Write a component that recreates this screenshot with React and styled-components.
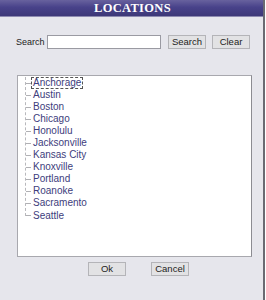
import React, { useState } from "react";
import styled, { createGlobalStyle } from "styled-components";

const Global = createGlobalStyle`
  html, body {
    margin: 0;
    padding: 0;
    background: #fff;
  }
`;

const Dialog = styled.div`
  width: 263px;
  height: 300px;
  background: #e6e6ec;
  border-right: 2px solid #6a6a72;
  box-sizing: content-box;
  display: flex;
  flex-direction: column;
  font-family: "Liberation Sans", Arial, sans-serif;
`;

const Title = styled.div`
  height: 16px;
  background: linear-gradient(#68629e, #48428a 45%, #3d3878);
  border-bottom: 1px solid #8d8ab0;
  color: #fff;
  font-family: "Liberation Serif", "Times New Roman", serif;
  font-weight: 700;
  font-size: 12.5px;
  line-height: 16px;
  text-align: center;
  letter-spacing: 0.3px;
  padding-left: 2px;
`;

const SearchRow = styled.div`
  display: flex;
  align-items: center;
  padding: 18px 0 0 16px;
  height: 14px;
`;

const Label = styled.label`
  font-size: 9px;
  color: #222;
  width: 31px;
`;

const Input = styled.input`
  width: 114px;
  height: 14px;
  box-sizing: border-box;
  border: 1px solid #9a9aa2;
  background: #fff;
  padding: 0 2px;
  margin: 0 7px 0 0;
  font-size: 10px;
  outline: none;
`;

const Button = styled.button`
  width: ${(p) => p.w || 38}px;
  height: 14px;
  box-sizing: border-box;
  border: 1px solid #b4b4b8;
  background: #e2e2e4;
  color: #222;
  font-family: "Liberation Sans", Arial, sans-serif;
  font-size: 9.5px;
  line-height: 12px;
  padding: 0;
  margin: 0 ${(p) => p.gap || 0}px 0 0;
  cursor: pointer;
`;

const Tree = styled.div`
  margin: 26px 0 0 17px;
  width: 235px;
  height: 182px;
  box-sizing: border-box;
  background: #fff;
  border: 1px solid #a8a8ae;
  border-right-color: #8c8c92;
  padding: 1px 0 0 7px;
`;

const List = styled.ul`
  list-style: none;
  margin: 0;
  padding: 0;
  border-left: 1px dashed #b8b8bc;
  width: 80px;
`;

const Item = styled.li`
  display: flex;
  align-items: center;
  height: 12px;
  font-size: 10px;
  color: #403d7c;

  &::before {
    content: "";
    width: 5px;
    border-top: 1px dashed #b0b0b4;
  }

  &:last-child {
    height: 7px;
    align-items: flex-end;
  }
`;

const Name = styled.span`
  line-height: 10px;
  padding: 0 1px;
  border: 1px ${(p) => (p.active ? "dashed #555" : "solid transparent")};
  white-space: nowrap;
  position: relative;
  top: ${(p) => (p.last ? "6px" : "0")};
`;

const Footer = styled.div`
  display: flex;
  justify-content: center;
  padding: 5px 0 0 14px;
  gap: 25px;
`;

const cities = [
  "Anchorage",
  "Austin",
  "Boston",
  "Chicago",
  "Honolulu",
  "Jacksonville",
  "Kansas City",
  "Knoxville",
  "Portland",
  "Roanoke",
  "Sacramento",
  "Seattle",
];

function App() {
  const [query, setQuery] = useState("");
  const [selected, setSelected] = useState("Anchorage");

  return (
    <>
      <Global />
      <Dialog>
        <Title>LOCATIONS</Title>
        <SearchRow>
          <Label>Search</Label>
          <Input value={query} onChange={(e) => setQuery(e.target.value)} />
          <Button w={38} gap={6}>Search</Button>
          <Button w={38} onClick={() => setQuery("")}>Clear</Button>
        </SearchRow>
        <Tree>
          <List>
            {cities.map((c, i) => (
              <Item key={c} onClick={() => setSelected(c)}>
                <Name active={selected === c} last={i === cities.length - 1}>
                  {c}
                </Name>
              </Item>
            ))}
          </List>
        </Tree>
        <Footer>
          <Button w={38}>Ok</Button>
          <Button w={38}>Cancel</Button>
        </Footer>
      </Dialog>
    </>
  );
}

export default App;
